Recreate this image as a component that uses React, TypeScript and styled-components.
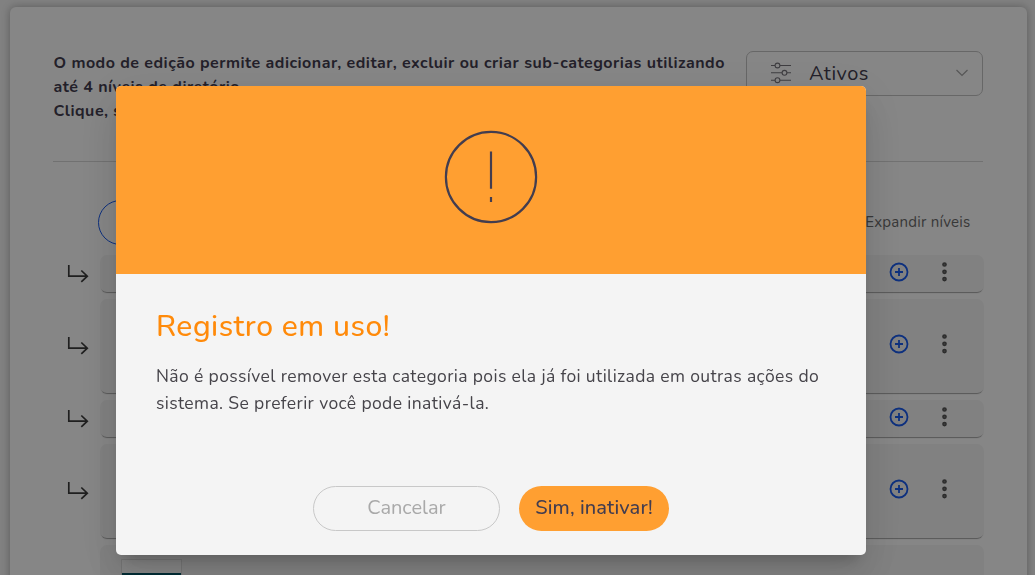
import React from 'react'
import styled, { createGlobalStyle } from 'styled-components'

const GlobalStyle = createGlobalStyle`
  * {
    box-sizing: border-box;
  }

  body {
    margin: 0;
    height: 100vh;
    overflow: hidden;
    background: #f5f5f5;
    color: #433d4f;
    font-family: Nunito, Lato, sans-serif;
  }

  button {
    font-family: inherit;
    cursor: pointer;
  }
`

const Page = styled.div`
  height: 100vh;
  padding: 7px 8px 0 10px;
  overflow: hidden;
`

const Card = styled.main`
  height: 700px;
  padding: 44px 43px 0;
  border-radius: 6px;
  background: #fff;
  box-shadow: 0 0 8px rgba(0, 0, 0, 0.3);
`

const Header = styled.header`
  display: flex;
  justify-content: space-between;
  align-items: flex-start;
  width: 930px;
  height: 111px;
  border-bottom: 1px solid #d8d8d8;
`

const Intro = styled.p`
  margin: 0;
  padding-left: 0.5px;
  font-size: 16px;
  font-weight: 700;
  line-height: 24px;
  letter-spacing: 0.49px;
  white-space: nowrap;
`

const Select = styled.div`
  display: flex;
  align-items: center;
  width: 237px;
  height: 45px;
  padding: 0 14px 0 24px;
  border: 1px solid #c4c4c4;
  border-radius: 7px;
  font-size: 20px;
  letter-spacing: 0.5px;

  > svg {
    margin-bottom: 2px;
  }
`

const SelectLabel = styled.span`
  flex: 1;
  margin-left: 18px;
`

const Toolbar = styled.div`
  display: flex;
  justify-content: space-between;
  align-items: center;
  height: 45px;
  margin: 38px 13.5px 10px 45px;
`

const OutlineButton = styled.button`
  width: 190px;
  height: 45px;
  border: 1px solid #1a5cf0;
  border-radius: 23px;
  background: none;
  color: #1a5cf0;
`

const Expand = styled.span`
  padding-bottom: 2px;
  font-size: 15px;
  letter-spacing: 0.25px;
  color: #6c6c6c;
`

const Rows = styled.div`
  display: flex;
  flex-direction: column;
  gap: 7px;
  width: 931px;
`

const Row = styled.div<{ $height: number }>`
  display: flex;
  align-items: center;
  height: ${({ $height }) => $height}px;

  > svg {
    margin: 0 11px 0 14px;
  }
`

const RowBody = styled.div`
  display: flex;
  flex: 1;
  justify-content: flex-end;
  align-items: center;
  gap: 31.5px;
  height: 100%;
  padding: 0 35.5px 4px 20px;
  border-radius: 7px;
  background: #f6f6f6;
  box-shadow: 0 2px 1px -1px rgba(0, 0, 0, 0.35);
`

const PictureBody = styled(RowBody)`
  justify-content: flex-start;
  align-items: flex-start;
  margin-left: 47px;
  padding: 14px 20px 0 20.5px;
`

const Thumb = styled.div`
  width: 61px;
  height: 60px;
  border: 1px solid #e0e0e0;
  background: linear-gradient(#fcfcfc 13px, #045464 13px);
`

const Backdrop = styled.div`
  position: fixed;
  inset: 0;
  padding: 86px 0 0 116px;
  background: rgba(0, 0, 0, 0.475);
`

const Modal = styled.section`
  width: 750px;
  height: 469px;
  border-radius: 5px;
  overflow: hidden;
  background: #f4f4f4;
  box-shadow: 0 11px 15px -7px rgba(0, 0, 0, 0.2), 0 24px 38px 3px rgba(0, 0, 0, 0.08),
    0 9px 46px 8px rgba(0, 0, 0, 0.06);
`

const Banner = styled.div`
  display: flex;
  justify-content: center;
  height: 188px;
  padding-top: 44px;
  background: #ff9f31;
`

const Content = styled.div`
  height: 212px;
  padding: 33px 40px 0;
`

const Title = styled.h1`
  margin: 0;
  font-size: 30px;
  font-weight: 500;
  line-height: 40px;
  letter-spacing: 0.52px;
  color: #ff8a0a;
`

const Message = styled.p`
  margin: 16px 0 0;
  font-size: 17.5px;
  line-height: 27px;
  letter-spacing: 0.38px;
  color: #46444a;
  white-space: nowrap;
`

const Actions = styled.div`
  display: flex;
  justify-content: center;
  gap: 19px;
`

const Action = styled.button<{ $primary?: boolean }>`
  width: ${({ $primary }) => ($primary ? 150 : 187)}px;
  height: 45px;
  padding: 0 0 3px;
  border: ${({ $primary }) => ($primary ? 'none' : '1px solid #c8c8c8')};
  border-radius: 23px;
  background: ${({ $primary }) => ($primary ? '#ff9f31' : 'transparent')};
  color: ${({ $primary }) => ($primary ? '#433d4f' : '#a9a9a9')};
  font-size: 20px;
  font-weight: ${({ $primary }) => ($primary ? 500 : 400)};
  letter-spacing: ${({ $primary }) => ($primary ? 0.1 : 0)}px;
  white-space: nowrap;
`

const SlidersIcon = () => (
  <svg width="20" height="22" viewBox="0 0 20 22" fill="none" stroke="#77757c" strokeWidth="1.1">
    <path d="M0 3.5h4M9 3.5h11M0 10.8h11M16 10.8h4M0 18.2h4M9 18.2h11" />
    <circle cx="6.5" cy="3.5" r="2.4" />
    <circle cx="13.5" cy="10.8" r="2.4" />
    <circle cx="6.5" cy="18.2" r="2.4" />
  </svg>
)

const ChevronIcon = () => (
  <svg width="12" height="8" viewBox="0 0 12 8" fill="none" stroke="#a5a5a5" strokeWidth="1.2">
    <path d="M.5 1 6 6.5 11.5 1" />
  </svg>
)

const LevelIcon = () => (
  <svg width="22" height="20" viewBox="0 0 22 20" fill="none" stroke="#3c3c3c" strokeWidth="1.7">
    <path d="M1.8 1v11.2h18.5M14.3 6.5l6 5.7-6 5.7" />
  </svg>
)

const PlusIcon = () => (
  <svg width="20" height="20" viewBox="0 0 20 20" fill="none" stroke="#1a5cf0" strokeWidth="1.8">
    <circle cx="10" cy="10" r="8.5" />
    <path d="M10 6v8M6 10h8" />
  </svg>
)

const DotsIcon = () => (
  <svg width="8" height="20" viewBox="0 0 8 20" fill="#777" stroke="#555" strokeWidth="1.5">
    <circle cx="3.5" cy="2.5" r="1.6" />
    <circle cx="3.5" cy="9.8" r="1.6" />
    <circle cx="3.5" cy="17.1" r="1.6" />
  </svg>
)

const AlertIcon = () => (
  <svg width="94" height="94" viewBox="0 0 94 94" fill="none" stroke="#433d4f" strokeWidth="2.2">
    <circle cx="47" cy="47" r="45.1" />
    <path d="M47 21.5v37.3M47 67v5" />
  </svg>
)

const rowHeights = [37, 94, 37, 94]

const App = (): JSX.Element => (
  <>
    <GlobalStyle />
    <Page>
      <Card>
        <Header>
          <Intro>
            O modo de edição permite adicionar, editar, excluir ou criar sub-categorias utilizando
            <br />
            até 4 níveis de diretório.
            <br />
            Clique, s
          </Intro>
          <Select>
            <SlidersIcon />
            <SelectLabel>Ativos</SelectLabel>
            <ChevronIcon />
          </Select>
        </Header>
        <Toolbar>
          <OutlineButton />
          <Expand>Expandir níveis</Expand>
        </Toolbar>
        <Rows>
          {rowHeights.map((height, index) => (
            <Row key={index} $height={height}>
              <LevelIcon />
              <RowBody>
                <PlusIcon />
                <DotsIcon />
              </RowBody>
            </Row>
          ))}
          <Row $height={95}>
            <PictureBody>
              <Thumb />
            </PictureBody>
          </Row>
        </Rows>
      </Card>
    </Page>
    <Backdrop>
      <Modal role="dialog">
        <Banner>
          <AlertIcon />
        </Banner>
        <Content>
          <Title>Registro em uso!</Title>
          <Message>
            Não é possível remover esta categoria pois ela já foi utilizada em outras ações do
            <br />
            sistema. Se preferir você pode inativá-la.
          </Message>
        </Content>
        <Actions>
          <Action>Cancelar</Action>
          <Action $primary>Sim, inativar!</Action>
        </Actions>
      </Modal>
    </Backdrop>
  </>
)

export default App
